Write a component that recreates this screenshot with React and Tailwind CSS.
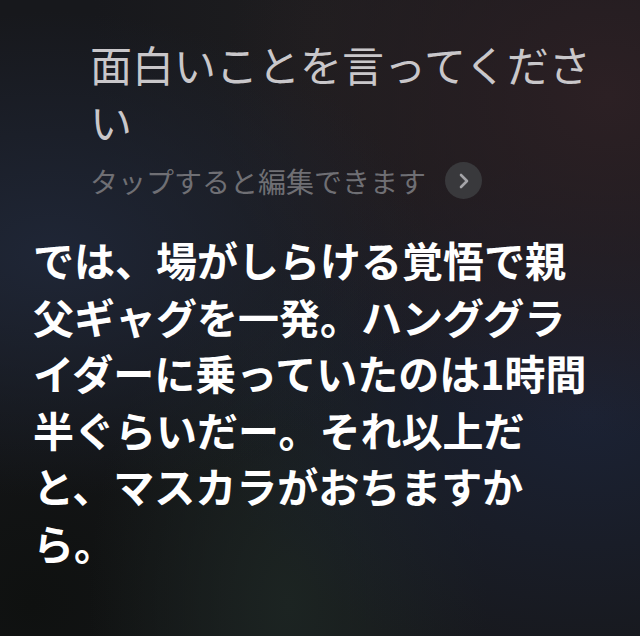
import React from 'react';

const queryLines = ['面白いことを言ってくださ', 'い'];

const answerLines = [
  'では、場がしらける覚悟で親',
  '父ギャグを一発。ハンググラ',
  'イダーに乗っていたのは1時間',
  '半ぐらいだー。それ以上だ',
  'と、マスカラがおちますか',
  'ら。',
];

const ChevronBadge = () => (
  <div className="flex h-[37px] w-[37px] items-center justify-center rounded-full bg-[#39393c]">
    <svg width="14" height="18" viewBox="0 0 14 18" fill="none">
      <path d="M4 3l6 6-6 6" stroke="#a4a4a8" strokeWidth="2.6" strokeLinecap="round" strokeLinejoin="round" />
    </svg>
  </div>
);

export default function App() {
  return (
    <div
      className="relative h-[636px] w-[640px] overflow-hidden bg-[#17181c] bg-[radial-gradient(ellipse_at_8%_40%,#1f2636_0%,transparent_45%),radial-gradient(ellipse_at_95%_15%,#2c2024_0%,transparent_45%),radial-gradient(ellipse_at_92%_65%,#1b2234_0%,transparent_45%),radial-gradient(ellipse_at_45%_95%,#1c2422_0%,transparent_40%),radial-gradient(ellipse_at_5%_95%,#0f1110_0%,transparent_40%),radial-gradient(ellipse_at_50%_5%,#1e1d1f_0%,transparent_50%)]"
      style={{ fontFamily: '"Noto Sans CJK JP", "Noto Sans", sans-serif' }}
    >
      <div className="pl-[90px] pt-[35px]">
        <div className="text-[42px] leading-[57px] font-normal text-[#c9c7ca]">
          {queryLines.map((l) => (
            <div key={l} className="whitespace-nowrap">{l}</div>
          ))}
        </div>
        <div className="mt-[13px] flex items-center gap-[19px]">
          <span className="text-[28px] leading-[36px] text-[#6f6f74] whitespace-nowrap">
            タップすると編集できます
          </span>
          <ChevronBadge />
        </div>
      </div>

      <div className="mt-[32px] pl-[33px] text-[41px] leading-[56.5px] font-bold text-white">
        {answerLines.map((l) => (
          <div key={l} className="whitespace-nowrap">{l}</div>
        ))}
      </div>
    </div>
  );
}
